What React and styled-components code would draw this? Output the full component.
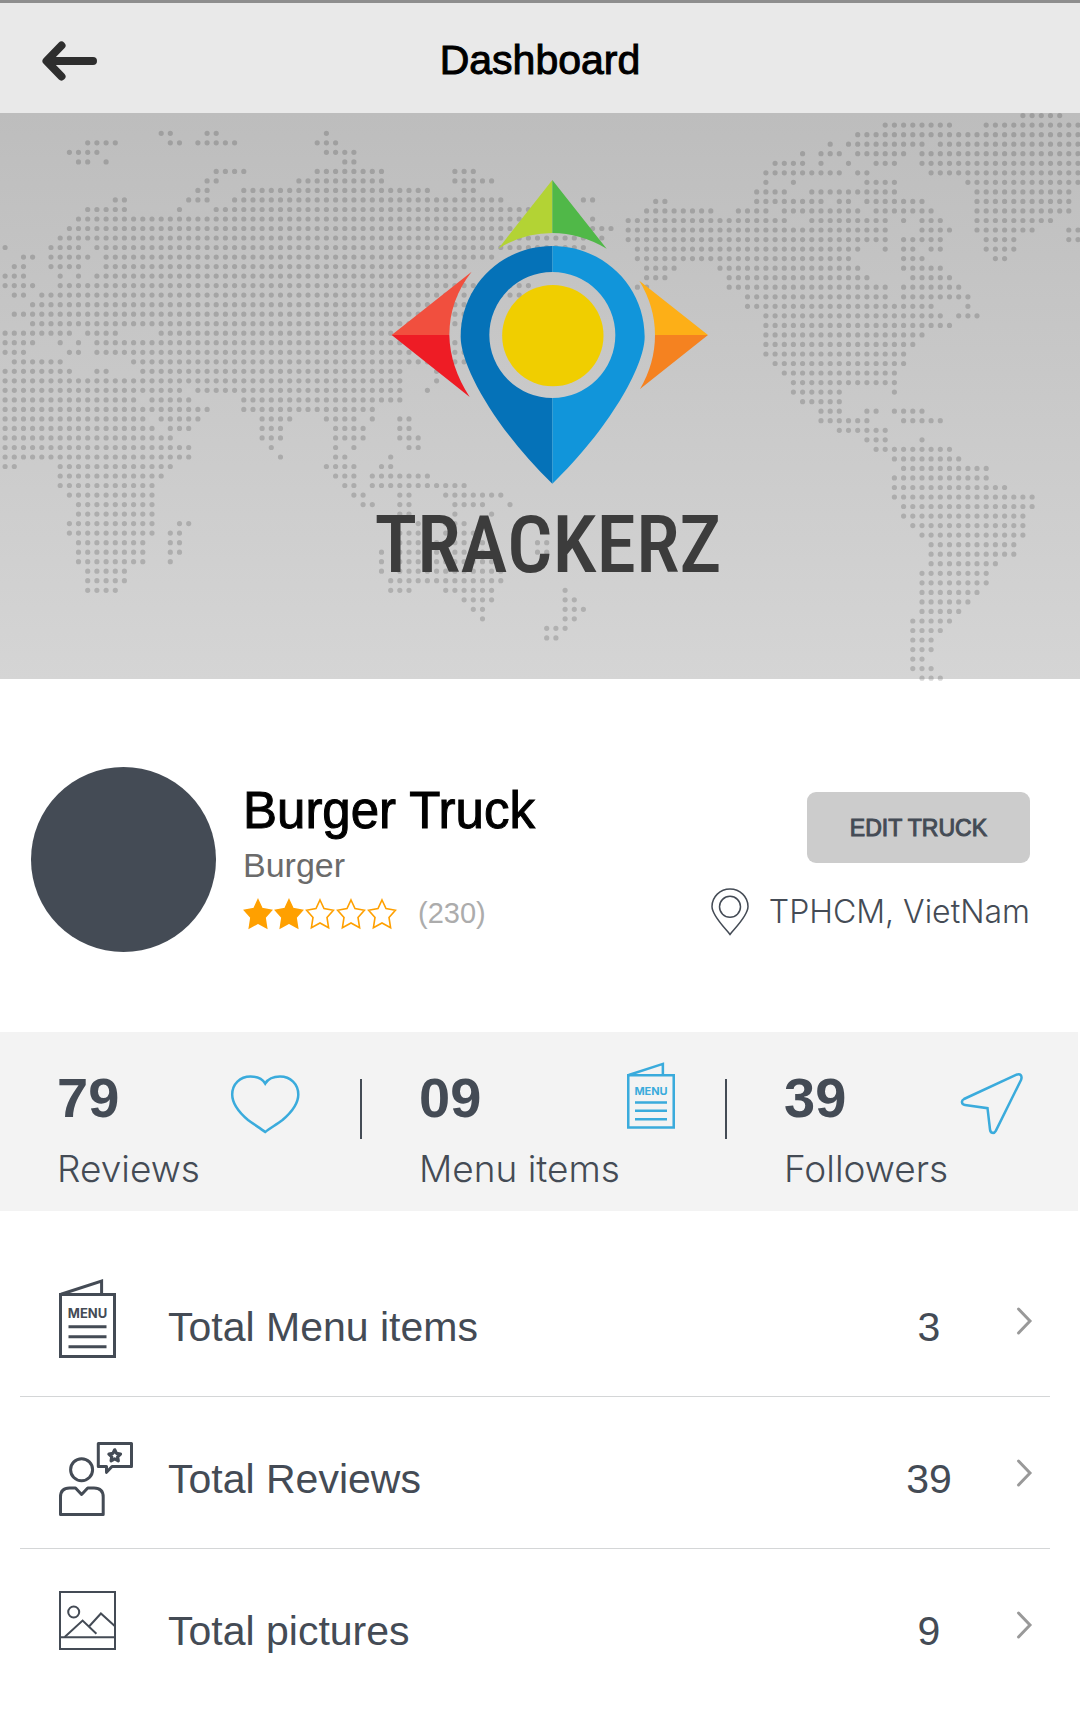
import React from "react";
import styled, { createGlobalStyle } from "styled-components";

const ink = "#444b55";
const sky = "#3aabdc";
const sans = `"Liberation Sans", Arial, Helvetica, sans-serif`;
const light = `Inter, "Liberation Sans", Arial, sans-serif`;

const GlobalStyle = createGlobalStyle`
  *, *::before, *::after { box-sizing: border-box; }
  body { margin: 0; background: #fff; color: ${ink}; font-family: ${sans}; }
  h1, h2, p, ul, dl, dd { margin: 0; padding: 0; }
  svg { display: block; overflow: visible; }
`;

/* Header */

const Header = styled.header`
  display: grid;
  grid-template-columns: 1fr auto 1fr;
  align-items: center;
  height: 113px;
  padding: 4px 40px 0;
  border-top: 3px solid #8e8e8e;
  background: #e9e9e9;
`;

const BackButton = styled.button`
  justify-self: start;
  padding: 0;
  border: 0;
  background: none;
  cursor: pointer;
`;

const Title = styled.h1`
  font-size: 41px;
  line-height: 48px;
  font-weight: 400;
  color: #000;
  -webkit-text-stroke: 1px #000;
`;

/* Hero */

const Hero = styled.section`
  position: relative;
  display: flex;
  flex-direction: column;
  align-items: center;
  padding: 67px 0 82px 16px;
  background: linear-gradient(#bdbdbd, #d5d5d5);
`;

const MapLayer = styled.svg`
  position: absolute;
  inset: 0;
  width: 100%;
  height: 100%;
`;

const LogoMark = styled.svg`
  position: relative;
  width: 330px;
  height: 304px;
`;

const Wordmark = styled.p`
  position: relative;
  margin-top: 9px;
  font-family: "Liberation Sans Narrow", "Roboto Condensed", "Liberation Sans", sans-serif;
  font-size: 80px;
  line-height: 104px;
  font-weight: 500;
  color: #3c3c3c;
`;

/* Profile */

const Profile = styled.section`
  display: flex;
  align-items: flex-start;
  padding: 88px 50px 80px 31px;
`;

const Avatar = styled.div`
  flex: none;
  width: 185px;
  height: 185px;
  margin-right: 27px;
  border-radius: 50%;
  background: ${ink};
`;

const Details = styled.div`
  flex: 1;
  padding-top: 12px;
`;

const Name = styled.h2`
  font-size: 51px;
  line-height: 64px;
  font-weight: 400;
  color: #000;
  -webkit-text-stroke: 1px #000;
`;

const Category = styled.p`
  font-size: 34px;
  line-height: 44px;
  color: #6b6b6b;
`;

const Rating = styled.div`
  display: flex;
  align-items: center;
  gap: 21px;
  margin-top: 8px;
`;

const Stars = styled.div`
  display: flex;
  gap: 1px;
`;

const RatingCount = styled.span`
  font-size: 29px;
  line-height: 36px;
  color: #acacac;
`;

const Side = styled.div`
  display: flex;
  flex-direction: column;
  align-items: flex-end;
  gap: 25px;
  padding-top: 25px;
`;

const EditButton = styled.button`
  padding: 2px 43px 0;
  border: 0;
  border-radius: 9px;
  background: #ccc;
  color: ${ink};
  font-family: ${sans};
  font-size: 23px;
  line-height: 69px;
  -webkit-text-stroke: 1px ${ink};
  cursor: pointer;
`;

const Location = styled.p`
  display: flex;
  align-items: center;
  gap: 20px;
  font-family: ${light};
  font-weight: 300;
  font-size: 32px;
  line-height: 42px;
`;

/* Statistics */

const Stats = styled.dl`
  display: grid;
  grid-template-columns: 362fr 365fr 351fr;
  margin-right: 2px;
  background: #f3f3f3;
`;

const Stat = styled.div`
  display: grid;
  grid-template-columns: 1fr auto 50px;
  grid-template-areas: "value icon line" "label label line";
  row-gap: 13px;
  padding: 30px 0 20px 57px;
`;

const StatValue = styled.dd`
  grid-area: value;
  font-size: 56px;
  line-height: 72px;
  font-weight: 700;
`;

const StatLabel = styled.dt`
  grid-area: label;
  font-family: ${light};
  font-weight: 300;
  font-size: 37px;
  line-height: 44px;
`;

const StatIcon = styled.svg`
  grid-area: icon;
  width: 84px;
  height: 72px;
  fill: none;
  stroke: ${sky};
  color: ${sky};
`;

const StatLine = styled.span`
  grid-area: line;
  justify-self: end;
  width: 2px;
  height: 60px;
  margin-top: 17px;
  background: ${ink};
`;

/* Totals */

const Totals = styled.ul`
  list-style: none;
  padding: 34px 30px 23px 20px;
`;

const TotalItem = styled.li`
  border-bottom: 1px solid ${(p) => (p.$last ? "transparent" : "#d4d6d7")};
`;

const TotalLink = styled.a`
  display: grid;
  grid-template-columns: 76px 1fr 120px 61px;
  align-items: center;
  height: 151px;
  padding-left: 39px;
  color: ${ink};
  text-decoration: none;
`;

const TotalText = styled.span`
  padding: 12px 0 0 33px;
  font-size: 41px;
  line-height: 48px;
`;

const TotalValue = styled.span`
  padding-top: 12px;
  text-align: center;
  font-size: 41px;
  line-height: 48px;
`;

const RowIcon = styled.svg`
  width: 76px;
  height: 88px;
  fill: none;
  stroke: ${ink};
  color: ${ink};
`;

const Chevron = styled.svg`
  width: 16px;
  height: 28px;
  margin-left: 27px;
  fill: none;
  stroke: #999;
  stroke-width: 3;
  stroke-linecap: round;
`;

/* Dotted map: each row lists runs of grid columns that carry a dot. */

const EAST = `17-18 22-23 35|9-12 18-19 21-25 34-36|7-10 35-38|8-9 11 37-38|23-26 34-41 49-51|22-23 32-41 49-53|21-22 26-46 50-51|12-13 20-22 25-54 63-64|9-13 19 23-57|8-57 64|7-66|6-65|0 5-8 10-63|2-3 5-9 11-53|1-2 5-8 11-50|0-2 6 8 10-49|0-3 6-57|1-2 4-56|3-50|1-50|3-50|0-7 9-12 17-48|0-3 6 8 10-50|0-2 7-8 10-50|1-6 14-50|0-7 10-11 15-43 47|0-43 47|0-19 21-43 46|0-14 16-20 26-43|0-22 26-40|0-15 17-21 28-31 35-38 40 43-44|0-16 18-20 28-30 36-39 43-44|0-18 28-30 36-39 43-45|0-20 29 36 38 44-45|0-20 30 36-37 42|0-1 6-18 35-38 41-42|6-17 36-38 40-46|6-16 37-38 40-50|7-16 38-39 43-44 48-54|8-16 39-40 43-44 49-52 55|8-16 43-44 49 53|7-16 19-20 45 48-50|7-16 18-19 43-45 48-51|8-15 18-19 43-52 58-59|8-15 18-19 41 43-53 58-59|8-15 18 41 43-53|9-13 41 43-54|9-13 42-54|9-12 42-44 48-53 61|50-53 61-62|51-52 61-63|52 61-62|59-61|59-60`;

const WEST = `43-47|28-35 39-49|25-49|22 24-32 34-49|19 21-23 25-30 32-49|16-19 21 24 27-29 32-49|15-23 25-26 33-49|15 18 26-29 37-49|14-17 20-29 38-48|3-4 14-21 23-24 26-32 38-48|2-9 12-15 17-25 27-33 38-48|0-17 20-28 30 32-34 38-46|0-28 32-35 38-44 48-49|0-28 30-34 39-42 48-49|1-25 28 30-31 33-34 39-42|1-24 30-32 40-41|2-5 10-25 30-34|2-4 11-26 31-35|1-2 11-28 30-36|13-28 30-37|13-33 37|15-34 36-38|15-35|15-32|15-31|15-30|16-30|17-29|18-29|18-23 29|19-23|21-23 26-27 29-32|21-26 30-34|23-28|26-28 32|27-35|29-36|30-39|29-39|29-41|29-44|30-44|30-43|31-43|32-43|33-42|33-42|33-40|32-39|32-39|32-38|32-37|32-36|31-35|31-34|31-33|31-33|31-32|31-33|32-34`;

function dots(source, originX, originY, stepX, stepY) {
  let path = "";
  source.split("|").forEach((row, r) => {
    row.split(" ").forEach((run) => {
      const [from, to = from] = run.split("-").map(Number);
      for (let c = from; c <= to; c += 1) {
        path += `M${(originX + c * stepX).toFixed(1)} ${(originY + r * stepY).toFixed(1)}h0`;
      }
    });
  });
  return path;
}

const mapPath = dots(EAST, 5.1, 20.3, 9.18, 9.52) + dots(WEST, 628.2, 2.6, 9.18, 9.535);

function WorldMap() {
  return (
    <MapLayer viewBox="0 0 1080 566" preserveAspectRatio="xMidYMid slice" aria-hidden="true">
      <path d={mapPath} fill="none" stroke="#000" strokeOpacity="0.16" strokeWidth="5.2" strokeLinecap="round" />
    </MapLayer>
  );
}

function Logo() {
  return (
    <LogoMark viewBox="39 60 990 912" aria-hidden="true">
      <path fill="#b3d334" d="M547 60 385 266Q460 219 547 219Z" />
      <path fill="#50b848" d="M547 60 710 266Q630 219 547 219Z" />
      <path fill="#f14f3e" d="M65 525 305 335Q238 420 238 525Z" />
      <path fill="#ee1c25" d="M65 525 299 711Q240 620 238 525Z" />
      <path fill="#fdaf17" d="M1014 525 808 362Q855 440 855 525Z" />
      <path fill="#f58220" d="M1014 525 810 687Q855 610 855 525Z" />
      <path fill="#0572b8" d="M547 258C395 258 272 378 272 530C272 620 380 810 547 971V714A189 189 0 0 1 547 336Z" />
      <path fill="#1195da" d="M547 258C700 258 824 378 824 530C824 620 714 810 547 971V714A189 189 0 0 0 547 336Z" />
      <circle cx="548.5" cy="527" r="152" fill="#f0ce00" />
    </LogoMark>
  );
}

function Star({ filled }) {
  return (
    <svg width="30" height="31" viewBox="0 0 30 31" aria-hidden="true">
      <path
        d="M15 2 19 10.6 28.4 12.3 22 19.4 23.6 29.8 15 25 6.4 29.8 8 19.4 1.6 12.3 11 10.6Z"
        fill={filled ? "#ffa000" : "none"}
        stroke="#ffa000"
        strokeWidth="1.6"
      />
    </svg>
  );
}

/* Folded menu card, drawn in a 57 by 79 area that starts at y = 2. */
function MenuCard() {
  return (
    <>
      <g strokeWidth="3">
        <path d="M1.5 17.5H55.5V79.5H1.5Z" />
        <path d="M2 17.2 42.6 4V17" />
        <path d="M9.5 49.7H47.5M9.5 59.7H47.5M9.5 69.7H47.5" />
      </g>
      <text x="28.5" y="41" textAnchor="middle" fill="currentColor" stroke="none" fontFamily="Inter, sans-serif" fontWeight="700" fontSize="13">
        MENU
      </text>
    </>
  );
}

const statIcons = {
  heart: (
    <path
      strokeWidth="2.5"
      d="M37.2 21.5C34.5 17 29 14.5 22.5 14.5C12 14.5 4.2 22 4.2 32.5C4.2 42 10 49.5 20 58C26 62.5 32 66 37.2 70C42.5 66 48.5 62.5 54.5 58C64.5 49.5 70.3 42 70.3 32.5C70.3 22 62.5 14.5 52 14.5C45.5 14.5 40 17 37.2 21.5Z"
    />
  ),
  menu: (
    <svg x="34" y="0" width="48" height="67" viewBox="0 2 57 79">
      <MenuCard />
    </svg>
  ),
  arrow: (
    <path
      strokeWidth="2.5"
      d="M72 12.8 20 37C17 38.5 17.3 42.5 21 43L43.5 46.2 46 67.5C46.5 71.5 50 72 51.8 68.8L77 18C78.5 14 76.5 10.8 72 12.8Z"
    />
  ),
};

const rowIcons = {
  menu: <MenuCard />,
  review: (
    <g strokeWidth="3" strokeLinejoin="round">
      <circle cx="22.6" cy="40.7" r="11" />
      <path d="M1.5 85.5V68Q1.5 59 10.5 59H16.5L22.6 65.5 28.7 59H35Q44.2 59 44.2 68V85.5Z" />
      <path d="M39.3 14.5H72.5V37.5H53L47.5 43.3V37.5H39.3Z" />
      <path strokeWidth="3.2" d="M55.7 20.8 57.5 24.4 61.5 25 58.6 27.8 59.3 31.8 55.7 29.9 52.1 31.8 52.8 27.8 49.9 25 53.9 24.4Z" />
    </g>
  ),
  picture: (
    <g strokeWidth="2">
      <path d="M1 11H56V68H1ZM1 56.3H56" />
      <circle cx="14.7" cy="31" r="5.5" />
      <path d="M5.7 56 23.6 39.5 37.4 52.7M30.5 45 41.9 32.5 56 45.2" />
    </g>
  ),
};

const stats = [
  { value: "79", label: "Reviews", icon: "heart" },
  { value: "09", label: "Menu items", icon: "menu" },
  { value: "39", label: "Followers", icon: "arrow" },
];

const totals = [
  { text: "Total Menu items", value: 3, icon: "menu", href: "#menu" },
  { text: "Total Reviews", value: 39, icon: "review", href: "#reviews" },
  { text: "Total pictures", value: 9, icon: "picture", href: "#pictures" },
];

export default function App() {
  return (
    <>
      <GlobalStyle />
      <Header>
        <BackButton type="button" aria-label="Back">
          <svg width="58" height="42" viewBox="0 0 58 42" fill="none" stroke="#2e2e2e" strokeWidth="8" strokeLinecap="round" strokeLinejoin="round" aria-hidden="true">
            <path d="M53 22H7M21.5 6.5 6.5 22 21.5 37.5" />
          </svg>
        </BackButton>
        <Title>Dashboard</Title>
      </Header>
      <main>
        <Hero>
          <WorldMap />
          <Logo />
          <Wordmark>TRACKERZ</Wordmark>
        </Hero>
        <Profile>
          <Avatar />
          <Details>
            <Name>Burger Truck</Name>
            <Category>Burger</Category>
            <Rating>
              <Stars role="img" aria-label="2 out of 5 stars">
                {[1, 2, 3, 4, 5].map((n) => (
                  <Star key={n} filled={n <= 2} />
                ))}
              </Stars>
              <RatingCount>(230)</RatingCount>
            </Rating>
          </Details>
          <Side>
            <EditButton type="button">EDIT TRUCK</EditButton>
            <Location>
              <svg width="38" height="48" viewBox="0 0 38 48" fill="none" stroke={ink} strokeWidth="1.5" aria-hidden="true">
                <path d="M19 46.5C14.5 40.5 1 28 1 18.6A18 17.6 0 0 1 37 18.6C37 28 23.5 40.5 19 46.5Z" />
                <circle cx="19" cy="18.8" r="10.5" />
              </svg>
              TPHCM, VietNam
            </Location>
          </Side>
        </Profile>
        <Stats>
          {stats.map((s, i) => (
            <Stat key={s.label}>
              <StatLabel>{s.label}</StatLabel>
              <StatValue>{s.value}</StatValue>
              <StatIcon viewBox="0 0 84 72" aria-hidden="true">{statIcons[s.icon]}</StatIcon>
              {i < stats.length - 1 && <StatLine />}
            </Stat>
          ))}
        </Stats>
        <Totals>
          {totals.map((t, i) => (
            <TotalItem key={t.text} $last={i === totals.length - 1}>
              <TotalLink href={t.href}>
                <RowIcon viewBox="0 0 76 88" aria-hidden="true">{rowIcons[t.icon]}</RowIcon>
                <TotalText>{t.text}</TotalText>
                <TotalValue>{t.value}</TotalValue>
                <Chevron viewBox="0 0 16 28" aria-hidden="true">
                  <path d="M2.5 2 14 14 2.5 26" />
                </Chevron>
              </TotalLink>
            </TotalItem>
          ))}
        </Totals>
      </main>
    </>
  );
}
